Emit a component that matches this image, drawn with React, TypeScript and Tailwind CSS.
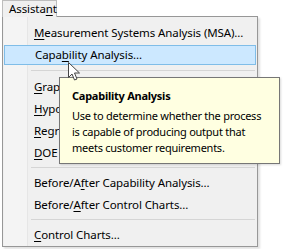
import type { ReactNode } from 'react'

type Item = { label: ReactNode; active?: boolean }

const u = (c: string) => <span className="underline underline-offset-[2px]">{c}</span>

function MenuItem({ label, active }: Item) {
  if (active) {
    return (
      <div className="h-[22px] px-[1px] py-[1px]">
        <div className="h-full flex items-center pl-[30px] bg-[#cce8ff] border border-[#7fbde8]">
          <span>{label}</span>
        </div>
      </div>
    )
  }
  return (
    <div className="h-[22px] flex items-center pl-[31px]">
      <span>{label}</span>
    </div>
  )
}

function Separator({ h, top }: { h: string; top: string }) {
  return (
    <div className={`${h} ${top} pl-[28px] pr-[2px]`}>
      <div className="h-px bg-[#d5d5d5]" />
    </div>
  )
}

export default function App() {
  return (
    <div
      className="relative w-[284px] h-[249px] bg-white overflow-hidden text-[11.5px] tracking-[-0.1px] text-black leading-none whitespace-nowrap"
      style={{ fontFamily: '"Noto Sans", "Open Sans", sans-serif' }}
    >
      {/* menu bar tab */}
      <div className="ml-[2px] w-[55px] h-[17px] bg-[#f0f0f0] border border-b-0 border-[#bdbdbd] flex items-center pl-[6px] -mb-px relative z-10">
        <span>Assista{u('n')}t</span>
      </div>

      {/* dropdown */}
      <div className="ml-[2px] w-[256px] h-[231px] bg-[#f0f0f0] border border-[#979797] flex shadow-[2px_2px_2px_rgba(0,0,0,0.12)]">
        <div className="relative flex-1 pt-[5px]">
          <div className="absolute left-[1px] top-0 bottom-0 w-[24px] bg-[#f4f4f4] border-r border-[#e6e6e6]" />
          <div className="relative">
            <MenuItem label={<>{u('M')}easurement Systems Analysis (MSA)...</>} />
            <MenuItem active label={<>Capa{u('b')}ility Analysis...</>} />
            <div className="h-[10px] pt-[4px] pl-[28px] pr-[2px]">
              <div className="h-px bg-[#d5d5d5]" />
            </div>
            <MenuItem label={<>{u('G')}raphical Analysis</>} />
            <MenuItem label={<>{u('H')}ypothesis Tests</>} />
            <MenuItem label={<>{u('R')}egression</>} />
            <MenuItem label={<>{u('D')}OE</>} />
            <Separator h="h-[8px]" top="pt-[3px]" />
            <MenuItem label={<>Before/A{u('f')}ter Capability Analysis...</>} />
            <MenuItem label={<>Before/{u('A')}fter Control Charts...</>} />
            <Separator h="h-[8px]" top="pt-[3px]" />
            <MenuItem label={<>{u('C')}ontrol Charts...</>} />
          </div>
        </div>
      </div>

      {/* tooltip */}
      <div className="absolute left-[59px] top-[77px] w-[221px] h-[87px] bg-[#ffffe1] border border-[#767676] pl-[12px] pt-[10px] text-[11px] tracking-[-0.25px] leading-[16px] shadow-[1px_1px_2px_rgba(0,0,0,0.15)]">
        <div className="font-bold mb-[4px]">Capability Analysis</div>
        <div>Use to determine whether the process</div>
        <div>is capable of producing output that</div>
        <div>meets customer requirements.</div>
      </div>

      {/* mouse cursor */}
      <svg className="absolute left-[68px] top-[62px]" width="13" height="20" viewBox="0 0 13 20">
        <path d="M0.5 0.5 L0.5 15.5 L4 12 L6.5 18 L9 17 L6.5 11 L11.5 11 Z" fill="#fff" stroke="#444" strokeWidth="1" />
      </svg>
    </div>
  )
}
